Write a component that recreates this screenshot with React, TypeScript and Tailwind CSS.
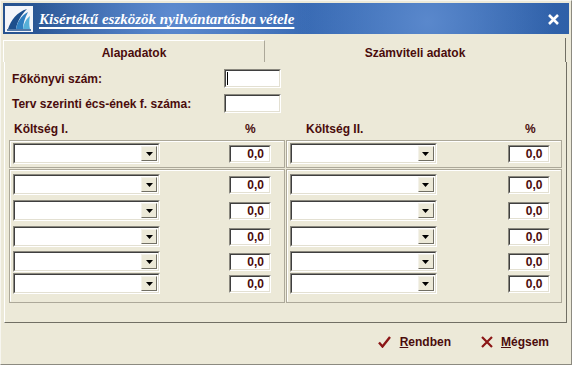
import { ReactNode } from "react";

const font = "font-['Liberation_Sans',Arial,sans-serif]";
const ink = "text-[#4a0c0c]";

function Sunken({ className = "", children }: { className?: string; children?: ReactNode }) {
  return (
    <div
      className={`border border-t-[#8a887e] border-l-[#8a887e] border-b-white border-r-white ${className}`}
    >
      <div className="h-full w-full border border-t-[#3f3f3f] border-l-[#3f3f3f] border-b-[#e3e0d2] border-r-[#e3e0d2] bg-white">
        {children}
      </div>
    </div>
  );
}

function Combo() {
  return (
    <Sunken className="h-[21px] w-[147px]">
      <div className="flex h-full justify-end p-[1px]">
        <div className="flex w-[16px] items-center justify-center border border-t-[#f4f2ea] border-l-[#f4f2ea] border-b-[#716f64] border-r-[#716f64] bg-[#ece9d8]">
          <svg width="7" height="4" viewBox="0 0 7 4">
            <path d="M0 0h7L3.5 4z" fill="#000" />
          </svg>
        </div>
      </div>
    </Sunken>
  );
}

function Pct() {
  return (
    <Sunken className="h-[18px] w-[42px]">
      <div className={`pr-[5px] text-right text-[12px] leading-[14px] font-bold ${ink}`}>0,0</div>
    </Sunken>
  );
}

function Row({ pctGap }: { pctGap: string }) {
  return (
    <div className="flex items-center">
      <Combo />
      <div className={pctGap}>
        <Pct />
      </div>
    </div>
  );
}

function Etched({ className = "", children }: { className?: string; children?: ReactNode }) {
  return (
    <div className={`border border-[#aca899] ${className}`}>
      <div className="h-full border border-t-white border-l-white border-b-transparent border-r-transparent">
        {children}
      </div>
    </div>
  );
}

// gaps above each combo row in the lower box
const margins = ["mt-[3px]", "mt-[5px]", "mt-[5px]", "mt-[4px]", "mt-[1px]"];

function Group({ first }: { first: boolean }) {
  const side = (right: boolean) => (
    <Etched className={right ? "w-[277px]" : "w-[276px]"}>
      <div className={`flex flex-col px-[2px] ${first ? "pt-[1px] pb-[2px]" : "pb-[7px]"}`}>
        {first ? (
          <Row pctGap={right ? "ml-[71px]" : "ml-[69px]"} />
        ) : (
          margins.map((m, i) => (
            <div key={i} className={m}>
              <Row pctGap={right ? "ml-[71px]" : "ml-[69px]"} />
            </div>
          ))
        )}
      </div>
    </Etched>
  );
  return (
    <div className="flex gap-[1px]">
      {side(false)}
      {side(true)}
    </div>
  );
}

function Logo() {
  return (
    <svg width="28" height="26" viewBox="0 0 28 26">
      <rect x="0" y="0" width="28" height="26" fill="#f4f6fa" />
      <path d="M3 23 C6 14 12 6 22 3 C16 9 12 16 11 23 Z" fill="#1d4f8c" />
      <path d="M11 23 C12 16 16 10 23 6 C20 12 18 17 18 23 Z" fill="#2f7fc0" />
      <path d="M18 23 C19 17 21 13 25 10 C24 15 24 19 25 23 Z" fill="#56b0d8" />
      <path d="M2 24 H26" stroke="#1d4f8c" strokeWidth="1.5" />
    </svg>
  );
}

export default function App() {
  return (
    <div className={`h-[365px] w-[572px] overflow-hidden bg-[#ece9d8] ${font}`}>
      <div className="flex h-full flex-col border border-t-[#f7f6f0] border-l-[#f7f6f0] border-b-[#8c8a80] border-r-[#8c8a80] px-[2px] pt-[2px]">
        {/* title bar */}
        <div className="flex h-[31px] items-center bg-[radial-gradient(circle_at_30%_40%,#5d8bd0_0,transparent_35%),radial-gradient(circle_at_75%_60%,#5a88cc_0,transparent_30%),linear-gradient(90deg,#27538f,#3b6bb4_40%,#3468b2_70%,#2f60a8)] pl-[2px] pr-[10px]">
          <Logo />
          <div className="ml-[6px] flex-1 pt-[2px] font-['Liberation_Serif',serif] text-[15px] font-bold italic leading-none text-white underline decoration-[1.5px] underline-offset-[3px]">
            Kisértékű eszközök nyilvántartásba vétele
          </div>
          <svg width="11" height="11" viewBox="0 0 11 11" className="mt-[1px]">
            <path d="M1 1L10 10M10 1L1 10" stroke="#fff" strokeWidth="2.6" />
          </svg>
        </div>

        {/* tabs */}
        <div className="mt-[4px] flex h-[24px] items-end">
          <div
            className={`flex h-[22px] w-[262px] items-center justify-center border border-b-0 border-t-white border-l-white border-r-[#aca899] pt-[3px] text-[12px] font-bold ${ink}`}
          >
            Alapadatok
          </div>
          <div
            className={`flex h-[24px] w-[301px] items-start justify-center border-r border-r-[#716f64] pt-[6px] text-[12px] font-bold ${ink}`}
          >
            Számviteli adatok
          </div>
        </div>

        {/* panel */}
        <div className="ml-[1px] flex h-[261px] w-[563px] flex-col border border-t-0 border-l-white border-r-[#716f64] border-b-[#716f64] px-[4px]">
          <div className={`mt-[7px] flex items-center text-[12px] font-bold ${ink}`}>
            <span className="ml-[3px] w-[212px]">Főkönyvi szám:</span>
            <Sunken className="h-[19px] w-[57px]">
              <div className="ml-[1px] mt-[1px] h-[13px] w-[1px] bg-black" />
            </Sunken>
          </div>
          <div className={`mt-[6px] flex items-center text-[12px] font-bold ${ink}`}>
            <span className="ml-[3px] w-[212px]">Terv szerinti écs-ének f. száma:</span>
            <Sunken className="h-[19px] w-[57px]" />
          </div>

          <div className={`mt-[7px] flex h-[18px] items-center text-[12px] font-bold ${ink}`}>
            <span className="ml-[5px] w-[231px]">Költség I.</span>
            <span className="w-[61px]">%</span>
            <span className="w-[219px]">Költség II.</span>
            <span>%</span>
          </div>

          <div className="mt-[2px] flex flex-col gap-[1px]">
            <Group first />
            <Group first={false} />
          </div>
        </div>

        {/* buttons */}
        <div className={`flex flex-1 items-center justify-end pb-[3px] pr-[20px] text-[12px] font-bold ${ink}`}>
          <div className="flex items-center">
            <svg width="13" height="12" viewBox="0 0 13 12">
              <path d="M1 6.5L4.5 10.5L12 1" stroke="#8b1616" strokeWidth="2.4" fill="none" />
            </svg>
            <span className="ml-[9px]">
              <span className="underline">R</span>endben
            </span>
          </div>
          <div className="ml-[30px] flex items-center">
            <svg width="12" height="12" viewBox="0 0 12 12">
              <path d="M1 1L11 11M11 1L1 11" stroke="#8b1616" strokeWidth="2.2" />
            </svg>
            <span className="ml-[8px]">
              <span className="underline">M</span>égsem
            </span>
          </div>
        </div>
      </div>
    </div>
  );
}
